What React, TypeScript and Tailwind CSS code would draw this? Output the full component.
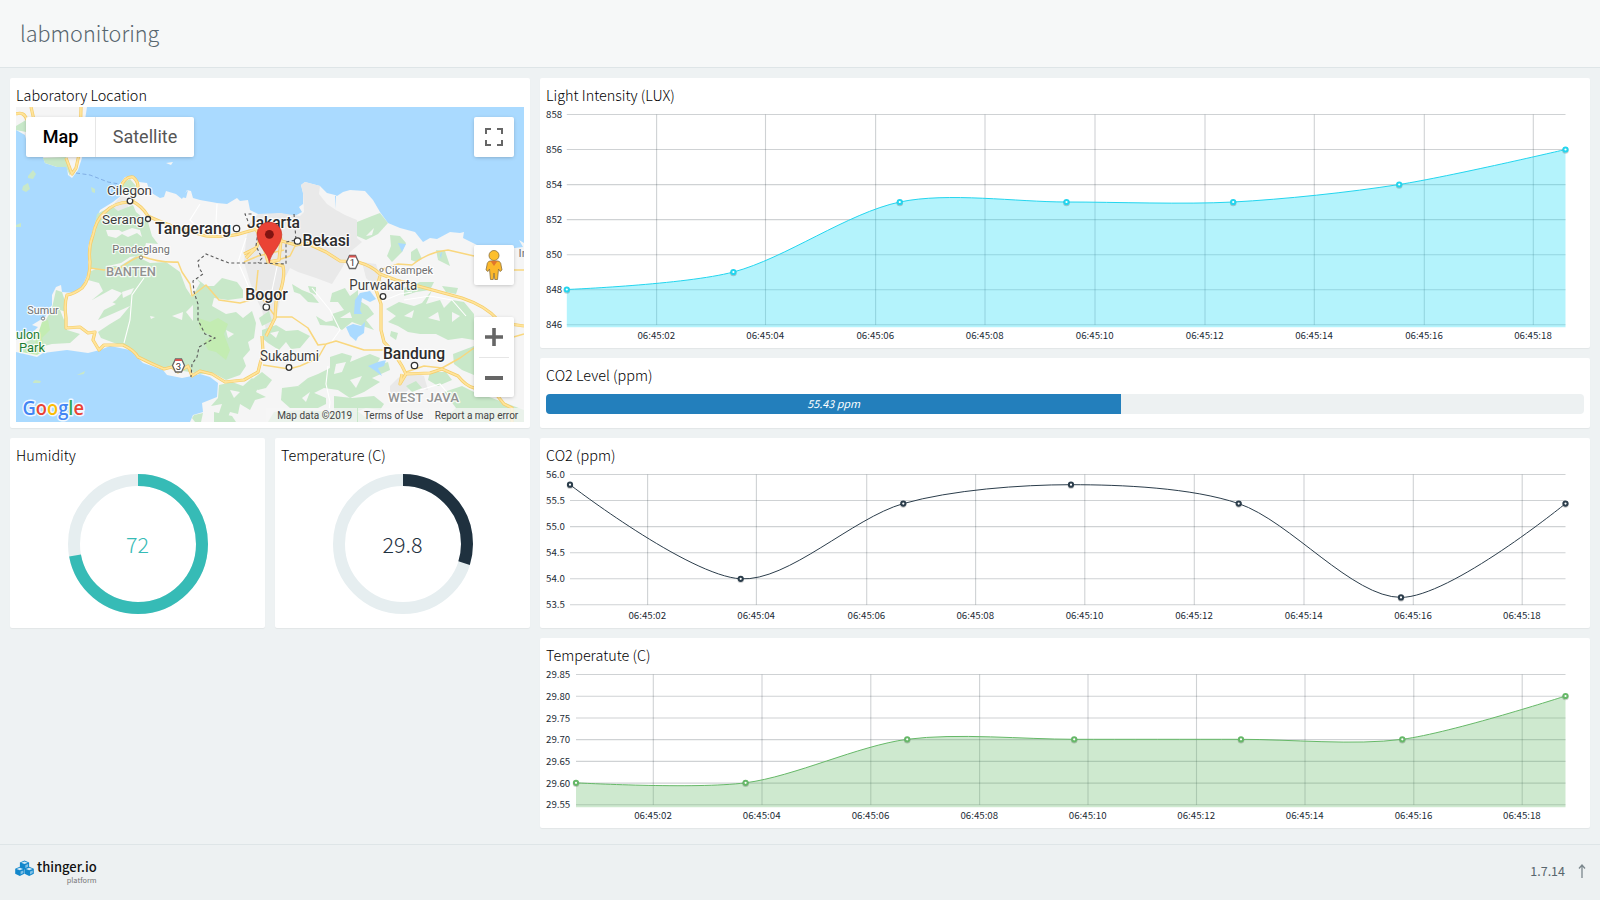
import type { ReactNode } from "react";

type Pt = [number, number];

const FONT = "font-['Noto_Sans_CJK_SC','Noto_Sans',sans-serif]";

/* ---------- charts ---------- */

function spline(pts: Pt[], smooth = 0.3): string {
  const ctrl = pts.map((p, i) => {
    const isEnd = i === 0 || i === pts.length - 1;
    const tension = isEnd ? 0 : smooth;
    const a = pts[Math.max(i - 1, 0)];
    const b = pts[Math.min(i + 1, pts.length - 1)];
    const d01 = Math.hypot(p[0] - a[0], p[1] - a[1]);
    const d12 = Math.hypot(b[0] - p[0], b[1] - p[1]);
    const fa = (tension * d01) / (d01 + d12);
    const fb = (tension * d12) / (d01 + d12);
    return {
      inn: [p[0] - fa * (b[0] - a[0]), p[1] - fa * (b[1] - a[1])],
      out: [p[0] + fb * (b[0] - a[0]), p[1] + fb * (b[1] - a[1])],
    };
  });
  let d = `M${pts[0][0]},${pts[0][1]}`;
  for (let i = 1; i < pts.length; i++) {
    const o = ctrl[i - 1].out;
    const n = ctrl[i].inn;
    d += ` C${o[0]},${o[1]} ${n[0]},${n[1]} ${pts[i][0]},${pts[i][1]}`;
  }
  return d;
}

interface ChartProps {
  height: number;
  left: number;
  top: number;
  bottom: number;
  labels: string[];
  ticks: number[];
  points: Pt[];
  stroke: string;
  fill?: string;
}

const RIGHT = 1025.5;

function Chart({ height, left, top, bottom, labels, ticks, points, stroke, fill }: ChartProps) {
  const step = (bottom - top) / (labels.length - 1);
  const line = spline(points);
  return (
    <svg width="1050" height={height} viewBox={`0 0 1050 ${height}`} className={`block ${FONT}`}>
      <g stroke="#1c2b36" strokeOpacity="0.21" strokeWidth="1.1">
        {labels.map((l, i) => (
          <line key={l} x1={left} x2={RIGHT} y1={top + i * step} y2={top + i * step} />
        ))}
        {ticks.map((t) => (
          <line key={t} x1={t} x2={t} y1={top} y2={bottom} />
        ))}
      </g>
      {fill && <path d={`${line} L${RIGHT},${bottom + 2.5} L${left},${bottom + 2.5} Z`} fill={fill} />}
      <path d={line} fill="none" stroke={stroke} strokeWidth="1" />
      {points.map(([x, y]) => (
        <g key={x}>
          <circle cx={x} cy={y + 1} r="3.3" fill="#000" fillOpacity="0.18" />
          <circle cx={x} cy={y} r="2.1" fill="#fff" stroke={stroke} strokeWidth="2" />
        </g>
      ))}
      <g fill="#1c2b36" fontSize="9.7">
        {labels.map((l, i) => (
          <text key={l} x="6" y={top + i * step + 3.6}>
            {l}
          </text>
        ))}
        {ticks.map((t, i) => (
          <text key={t} x={t - 0.3} y={bottom + 14.4} textAnchor="middle">
            {`06:45:${String((i + 1) * 2).padStart(2, "0")}`}
          </text>
        ))}
      </g>
    </svg>
  );
}

/* ---------- gauges ---------- */

function Donut({ value, share, color }: { value: string; share: number; color: string }) {
  const c = 2 * Math.PI * 64;
  return (
    <div className="flex justify-center pt-[7px]">
      <svg width="140" height="140" viewBox="0 0 140 140" className={FONT}>
        <circle cx="70" cy="70" r="64" fill="none" stroke="#e6eef0" strokeWidth="12" />
        <circle
          cx="70"
          cy="70"
          r="64"
          fill="none"
          stroke={color}
          strokeWidth="12"
          strokeDasharray={`${c * share} ${c}`}
          transform="rotate(-90 70 70)"
        />
        <text x="69.5" y="79" textAnchor="middle" fontSize="21.5" fontWeight="300" fill={color}>
          {value}
        </text>
      </svg>
    </div>
  );
}

/* ---------- map ---------- */

const GREEN = [
  "16,126 26,120 26,132 16,130",
  "43,158 66,157 70,168 70,176 66,167 57,167 45,163",
  "28,176 33,170 36,174 33,179 28,178",
  "23,186 28,183 30,189 26,192 22,190",
  "91,187 95,189 95,193 92,192",
  "16,225 21,223 21,227 16,227",
  "122,183 130,179 136,186 131,196 124,192",
  "97,214 112,206 118,211 133,205 136,212 148,222 152,236 158,244 146,243 143,255 130,257 121,263 108,266 100,270 89,268 89,246 93,233",
  "91,271 104,266 120,266 136,256 150,263 166,262 180,272 186,288 192,297 200,283 196,278 206,286 214,286 222,278 237,282 243,290 243,298 228,300 214,298 212,306 226,314 236,312 243,318 252,311 256,323 254,338 248,342 250,350 243,358 246,366 240,375 226,380 213,373 200,374 190,372 183,371 172,368 163,369 142,360 131,349 117,344 101,338 98,332 110,324 120,318 130,306 112,314 98,320 104,310 116,304 108,300 92,300 103,291 99,283 88,280",
  "56,290 62,292 66,304 66,318 67,330 80,334 70,343 52,344 40,347 37,354 24,352 20,345 34,338 44,324 52,308",
  "33,382 35,380 41,381 40,383 33,383",
  "77,375 85,371 84,374 78,375",
  "195,422 192,418 194,415 203,413 201,422",
  "219,385 232,382 243,386 252,378 260,384 256,392 266,397 255,400 250,410 240,404 238,414 230,412 226,422 216,422 222,404 211,406 218,398",
  "246,384 262,372 272,380 266,388 258,390",
  "214,412 232,416 236,422 214,422",
  "262,330 276,325 286,331 298,330 310,336 300,348 291,349 286,342 279,350 268,343 262,338",
  "259,318 269,311 272,321 262,326",
  "292,284 302,290 312,294 319,303 308,302 300,294 294,292",
  "308,286 316,287 316,295 310,292",
  "332,293 345,288 350,296 358,290 358,300 368,306 374,314 366,320 374,330 360,325 352,322 342,330 334,326 332,314 344,310 338,302 330,302",
  "316,316 326,322 335,320 336,326 320,325",
  "357,222 372,216 380,213 388,223 378,234 366,240 357,236",
  "390,235 400,236 406,243 402,252 392,262 387,256 391,246",
  "411,252 417,248 422,259 416,262 411,260",
  "436,250 445,251 450,266 438,260",
  "386,309 399,302 414,306 422,303 432,290 426,304 440,300 444,308 452,300 464,302 474,314 474,340 462,338 448,340 436,334 420,334 408,332 398,326 388,322 396,316",
  "404,288 420,282 434,282 430,290 416,292 404,296",
  "442,286 458,288 456,294 446,292",
  "391,331 398,333 396,340 390,336",
  "453,354 474,346 474,375 462,370 454,364",
  "330,357 342,353 352,356 350,362 362,357 370,354 380,358 376,366 388,362 390,370 372,378 380,382 364,392 350,398 338,390 324,388 312,394 298,386 308,378 318,374 330,368",
  "282,388 298,386 312,392 326,398 326,404 318,408 290,408 281,400",
  "334,396 352,398 374,396 384,404 380,410 366,408 350,414 334,410",
  "430,372 446,372 452,380 438,386 428,380",
  "444,392 462,386 474,392 492,398 508,404 524,410 524,422 440,422 456,408",
  "274,412 300,410 340,412 356,410 372,422 268,422",
  "406,386 416,381 422,388 412,392",
  "304,396 312,394 320,402 308,404",
];

const GAPS = [
  "106,230 119,230 122,232 132,228 140,230 142,237 137,233 128,237 122,234 116,238 108,236",
  "92,300 112,289 122,293 116,300 104,308 96,306",
  "122,292 134,288 131,294 123,298",
  "172,316 183,312 182,320",
  "186,312 193,305 193,321",
  "150,316 155,317 151,319",
  "366,236 374,228 372,235",
  "270,333 279,331 276,338",
  "340,318 350,312 352,318",
  "404,316 414,310 412,318",
  "428,318 438,312 440,321",
  "452,312 460,316 452,322",
  "336,364 346,362 342,372 334,374",
  "350,380 362,376 356,388",
  "302,398 310,392 306,402",
  "230,390 240,392 234,398",
  "226,330 234,334 228,338",
  "60,310 66,312 64,320",
];

const DARK = [
  "300,216 304,212 303,193 301,185 305,182 320,186 319,194 327,204 336,210 345,215 357,220 357,238 362,242 350,252 342,268 332,284 316,278 298,272 290,268 284,280 276,320 266,330 262,310 256,298 250,282 244,262 246,240 250,222 258,214 280,213",
  "121,196 128,198 128,208 118,212 112,206",
  "390,386 398,378 410,372 424,376 428,390 412,386 400,398 390,394",
  "362,262 376,264 382,282 374,286 366,278",
];

const ROADS_WIDE = [
  "M81,107 L80,150 L76,168 L72,174 L66,158",
  "M31,107 L34,120",
  "M16,114 Q24,111 27,120",
  "M121,187 Q125,176 133,177 Q140,183 137,190 L132,201 Q142,206 148,216 Q160,222 178,228 L206,236 Q228,238 246,232 L260,228",
  "M130,202 Q114,202 104,213 Q96,220 93,235 Q88,248 90,262 Q90,280 82,288 Q74,294 67,295 Q64,304 66,318 L66,328 L80,327 L88,333 L95,332 L93,340 L99,350 L104,345 L123,345 Q134,350 138,357 Q152,364 164,369 L172,367 L178,372 L188,366 L192,376 L200,371 L212,374 L225,382 L244,380 L258,372 L263,352 L262,336",
  "M244,254 L256,248 L262,236 M256,248 L246,258",
  "M269,262 L283,266 Q286,280 276,302 L275,318 L266,336",
  "M254,226 L262,240 L268,262 L279,260 L281,240 L278,222",
  "M278,240 L296,245 L306,243 L326,252 L340,261 L358,262 Q372,266 380,274 L396,280 Q440,292 462,298 Q486,306 498,320 L510,324 L524,326",
  "M380,276 L376,290 L381,304 L381,330 L384,342 Q394,352 402,366 L406,374 L430,373 L442,369 L458,376 Q466,386 474,388 L496,394 L504,404 L512,408 L512,422",
  "M402,374 L400,384 L406,374",
];

const ROADS_THIN = [
  "M90,268 L104,270 L120,268 Q134,258 141,256 Q160,263 178,262 L182,272 L190,284 L192,296 L206,285 L219,300 L240,303 L258,298",
  "M258,270 L256,290 L272,312 L276,317 L292,317 L308,328 L318,345 L326,344 L336,341 L364,350 L384,350",
  "M326,344 L318,358 L300,366 L289,369 L263,365",
  "M380,270 L398,264 L412,265 Q428,252 448,250 L474,256",
  "M406,372 L424,366 L442,368 L460,358 L474,348",
  "M509,270 L524,270",
  "M510,338 L524,334",
  "M296,244 L290,256 L278,260",
  "M244,262 L258,256 L284,250",
];

const WATER = [
  "M354,314 L355,300 L360,293 L370,291 L376,299 L370,302 L362,298 L360,310 L362,314 Z",
  "M346,327 L353,324 L361,326 L365,322 L364,333 L358,337 L356,341 L350,336 Z",
  "M368,366 L378,362 L386,360 L384,366 L378,368 L382,376 L374,370 Z",
  "M398,243 L406,244 L402,252 Z",
  "M181,197 L188,190 L186,198 Z",
  "M440,255 L442,251 L441,259 Z",
  "M335,196 L336,209 L336,196 Z",
];

const MINOR = [
  "M144,278 L132,295 L130,320 L124,343",
  "M246,238 L238,262 L250,290",
  "M278,262 L270,300",
  "M200,204 L190,220 L206,236",
  "M217,204 L216,222 L230,240",
  "M312,288 L330,310 L340,330 L330,344",
  "M404,300 L430,296 L452,300 L466,316",
  "M328,366 L326,384 L330,402 L328,420",
  "M420,390 L440,384 L450,396",
  "M380,302 L400,294 L412,292",
];

interface Place {
  t: string;
  x: number;
  y: number;
  s: number;
  w: number;
  c: string;
  b?: boolean;
  dot?: [number, number, number];
}

const PLACES: Place[] = [
  { t: "Cilegon", x: 107, y: 195, s: 13.6, w: 45, c: "#3c3c3c", dot: [130, 201, 2.8] },
  { t: "Serang", x: 102, y: 224, s: 13.6, w: 42, c: "#3c3c3c", dot: [148, 219, 2.5] },
  { t: "Tangerang", x: 155, y: 234, s: 16.2, w: 76, c: "#2c2c2c", b: true, dot: [236.5, 228.5, 3.2] },
  { t: "Jakarta", x: 247, y: 227.7, s: 16.2, w: 53, c: "#2c2c2c", b: true },
  { t: "Bekasi", x: 302.4, y: 246.3, s: 16.2, w: 47.5, c: "#2c2c2c", b: true, dot: [297.5, 241, 3.2] },
  { t: "Pandeglang", x: 112.3, y: 253, s: 11.5, w: 57.5, c: "#707070", dot: [141, 257.5, 1.6] },
  { t: "BANTEN", x: 106, y: 276, s: 13, w: 50, c: "#929292", b: true },
  { t: "Sumur", x: 27.3, y: 314, s: 11.5, w: 31.5, c: "#707070", dot: [43, 318.5, 1.6] },
  { t: "Bogor", x: 245.3, y: 300, s: 16, w: 42.5, c: "#2c2c2c", b: true, dot: [266.3, 307, 3.2] },
  { t: "Sukabumi", x: 260, y: 361, s: 14, w: 59, c: "#3c3c3c", dot: [289, 367.5, 2.8] },
  { t: "Bandung", x: 383, y: 358.7, s: 16.2, w: 62, c: "#2c2c2c", b: true, dot: [414.5, 365.5, 3.2] },
  { t: "WEST JAVA", x: 388, y: 402, s: 13, w: 71, c: "#929292", b: true },
  { t: "Purwakarta", x: 349.3, y: 290, s: 14, w: 68, c: "#3c3c3c", dot: [383, 296.5, 2.8] },
  { t: "Cikampek", x: 385, y: 274, s: 11.5, w: 48, c: "#707070", dot: [381.5, 270, 1.6] },
  { t: "ulon", x: 16, y: 339, s: 13, w: 24, c: "#1c7d33" },
  { t: "Park", x: 19, y: 352, s: 13, w: 26, c: "#1c7d33" },
];

function Shield({ x, y, n }: { x: number; y: number; n: string }) {
  return (
    <g transform={`translate(${x} ${y})`}>
      <path d="M-3,-6.5 H3 L6,0 L3,6.5 H-3 L-6,0 Z" fill="#fff" stroke="#666" strokeWidth="1.3" />
      <path d="M-2.8,-6.5 H2.8 L3.8,-4.4 H-3.8 Z" fill="#d9534f" />
      <text y="4" textAnchor="middle" fontSize="9.5" fill="#333">
        {n}
      </text>
    </g>
  );
}

function MapDrawing() {
  return (
    <svg
      width="508"
      height="315"
      viewBox="16 107 508 315"
      className="block font-['Roboto','Liberation_Sans',sans-serif]"
    >
      <rect x="16" y="107" width="508" height="315" fill="#aadaff" />
      <g fill="#f5f5f5">
        <path d="M16,107 H87 L85,120 L84,135 L82,158 L78,170 L72,178 L68,175 L67,167 L57,167 L45,163 L43,157 L27,143 L25,135 L16,130 Z" />
        <path d="M119,185 L125,177 L133,176 L139,182 L147,183 L150,192 L160,198 L164,197 L166,191 L176,194 L182,199 L187,190 L191,191 L193,198 L200,200 L217,203 L227,204 L237,198 L240,201 L248,200 L250,210 L258,214 L270,215 L280,213 L293,217 L302,212 L299,207 L303,204 L303,193 L301,185 L305,182 L320,186 L327,193 L335,195 L337,196 L343,192 L350,190 L365,191 L373,200 L380,212 L388,223 L400,228 L415,232 L423,242 L430,238 L437,239 L450,232 L460,233 L464,232 L463,238 L477,245 L515,248 L523,247 L519,240 L524,243 V422 H190 L193,415 L203,412 L202,403 L217,397 L218,383 L210,377 L200,374 L192,376 L182,378 L167,375 L163,370 L143,363 L130,350 L110,346 L100,350 L88,353 L67,350 L43,353 L37,357 L16,352 V340 L30,335 L38,327 L32,325 L45,317 L52,305 L52,295 L56,287 L61,285 L62,292 L75,293 L83,285 L88,273 L88,247 L92,233 L97,217 L100,210 L113,202 L122,195 Z" />
        <path d="M166,163 L173,162 L171,165 Z" />
      </g>
      <g fill="#e9e9e9">
        {DARK.map((p) => (
          <polygon key={p} points={p} />
        ))}
      </g>
      <g fill="#c8e8c9">
        {GREEN.map((p) => (
          <polygon key={p} points={p} />
        ))}
      </g>
      <g fill="#c3ecb2">
        <path d="M198,318 L210,322 L218,318 L228,324 L224,334 L230,350 L226,360 L216,352 L208,350 L204,342 L212,336 L200,330 Z" />
        <path d="M42,322 L48,320 L50,330 L42,338 L45,350 L37,355 L22,352 L34,346 Z" />
      </g>
      <g fill="#f5f5f5">
        {GAPS.map((p) => (
          <polygon key={p} points={p} />
        ))}
      </g>
      <g fill="#aadaff">
        {WATER.map((p) => (
          <path key={p} d={p} />
        ))}
      </g>
      <g fill="none" stroke="#fff" strokeWidth="1.1">
        {MINOR.map((p) => (
          <path key={p} d={p} />
        ))}
      </g>
      <g fill="none" strokeLinejoin="round">
        <g stroke="#f9d77e" strokeWidth="1.5">
          {ROADS_THIN.map((p) => (
            <path key={p} d={p} />
          ))}
        </g>
        <g stroke="#f5cd6a" strokeWidth="3.2">
          {ROADS_WIDE.map((p) => (
            <path key={p} d={p} />
          ))}
        </g>
        <g stroke="#ffe49b" strokeWidth="1.8">
          {ROADS_WIDE.map((p) => (
            <path key={p} d={p} />
          ))}
        </g>
      </g>
      <path d="M76,173 L90,175 L108,182 L119,184" fill="none" stroke="#82afe6" strokeWidth="1" strokeDasharray="4 2.5" />
      <g fill="none" stroke="#5b5b5b" strokeWidth="1.1" strokeDasharray="3 2.5">
        <path d="M250,226 L245,214 L252,214 M294,214 L296,240 L286,242 L286,264 L258,263 L229,263 L216,258 L206,254 L198,261 L199,268 L203,274 L193,281 L194,292 L198,304 L198,320 L205,334 L215,338 L199,347 L197,357 L192,364 L191,377" />
        <path d="M258,232 L256,246 L262,258 L258,263" />
      </g>
      <Shield x={178.5} y={365.5} n="3" />
      <Shield x={352.5} y={262} n="1" />
      <g fill="#fff">
        {PLACES.map(
          (p) =>
            p.dot && (
              <circle
                key={p.t}
                cx={p.dot[0]}
                cy={p.dot[1]}
                r={p.dot[2]}
                stroke={p.dot[2] < 2 ? "#777" : "#333"}
                strokeWidth={p.dot[2] < 2 ? 1 : 1.3}
              />
            ),
        )}
      </g>
      {PLACES.map((p) => (
        <text
          key={p.t}
          x={p.x}
          y={p.y}
          fontSize={p.s}
          textLength={p.w}
          lengthAdjust="spacingAndGlyphs"
          fontWeight={p.b ? 500 : 400}
          fill={p.c}
          stroke="#fff"
          strokeOpacity="0.85"
          strokeWidth="2.4"
          strokeLinejoin="round"
          paintOrder="stroke"
        >
          {p.t}
        </text>
      ))}
      <text x="518.5" y="257" fontSize="11.5" fill="#707070">
        In
      </text>
      <path
        d="M269.3,263 C268,252 257,246 257,234.5 A12.4,12.4 0 0 1 281.8,234.5 C281.8,246 270.6,252 269.3,263 Z"
        fill="#ea4335"
        stroke="#c5372c"
        strokeWidth="0.6"
      />
      <circle cx="269.4" cy="234.3" r="4.4" fill="#811411" />
      <text
        x="22.5"
        y="415"
        fontSize="20.5"
        textLength="61.5"
        lengthAdjust="spacingAndGlyphs"
        stroke="#fff"
        strokeWidth="3"
        strokeOpacity="0.85"
        strokeLinejoin="round"
        paintOrder="stroke"
        className="font-['Open_Sans','Lato',sans-serif] font-semibold"
      >
        <tspan fill="#4285f4">G</tspan>
        <tspan fill="#ea4335">o</tspan>
        <tspan fill="#fbbc05">o</tspan>
        <tspan fill="#4285f4">g</tspan>
        <tspan fill="#34a853">l</tspan>
        <tspan fill="#ea4335">e</tspan>
      </text>
    </svg>
  );
}

function MapPanel() {
  return (
    <div className="relative mx-[6px] h-[315px] w-[508px] overflow-hidden font-['Roboto','Liberation_Sans',sans-serif]">
      <MapDrawing />
      <div className="absolute top-[10px] left-[10px] flex h-10 overflow-hidden rounded-[2px] bg-white text-[18px] leading-10 shadow-[0_1px_4px_-1px_rgba(0,0,0,0.3)]">
        <div className="w-[70px] border-r border-[#e6e6e6] text-center font-medium text-black">Map</div>
        <div className="w-[98px] text-center text-[#565656]">Satellite</div>
      </div>
      <div className="absolute top-[10px] right-[10px] flex h-10 w-10 items-center justify-center rounded-[2px] bg-white shadow-[0_1px_4px_-1px_rgba(0,0,0,0.3)]">
        <svg width="18" height="18" viewBox="0 0 18 18" fill="#666">
          <path d="M0,0 V6 H2 V2 H6 V0 Z M16,0 H12 V2 H16 V6 H18 V0 Z M16,16 H12 V18 H18 V12 H16 Z M2,12 H0 V18 H6 V16 H2 Z" />
        </svg>
      </div>
      <div className="absolute top-[138px] right-[10px] flex h-10 w-10 items-center justify-center rounded-[2px] bg-white pr-px shadow-[0_1px_4px_-1px_rgba(0,0,0,0.3)]">
        <svg width="20" height="32" viewBox="0 0 20 32">
          <path
            d="M6,12 H14 C16,12.5 17,14 17,16 L18,21 L16,22.5 L14.5,20 L13.5,30.5 H10.8 L10,24 L9.2,30.5 H6.5 L5.5,20 L4,22.5 L2,21 L3,16 C3,14 4,12.5 6,12 Z"
            fill="#fbb82b"
            stroke="#8a7140"
            strokeWidth="0.8"
          />
          <path d="M6.5,12 H13.5 L10,17 Z" fill="#e0762c" />
          <circle cx="10" cy="6.5" r="5" fill="#fdbf2d" stroke="#8a7140" strokeWidth="0.8" />
        </svg>
      </div>
      <div className="absolute top-[210px] right-[10px] flex h-20 w-10 flex-col items-center rounded-[2px] bg-white shadow-[0_1px_4px_-1px_rgba(0,0,0,0.3)]">
        <div className="flex h-10 items-center">
          <svg width="18" height="18" viewBox="0 0 18 18" fill="#666">
            <path d="M7.2,0 H10.8 V7.2 H18 V10.8 H10.8 V18 H7.2 V10.8 H0 V7.2 H7.2 Z" />
          </svg>
        </div>
        <div className="h-px w-[30px] bg-[#e6e6e6]" />
        <div className="flex h-[39px] items-center">
          <div className="h-[4px] w-[18px] bg-[#666]" />
        </div>
      </div>
      <div className="absolute right-0 bottom-0 flex h-[14px] gap-px text-[10px] leading-[16px] whitespace-nowrap text-[#444]">
        <div className="w-[91px] bg-[#f5f5f5]/75 pr-[5px] text-right">Map data ©2019</div>
        <div className="w-[70px] bg-[#f5f5f5]/75 pl-px text-center">Terms of Use</div>
        <div className="w-[95px] bg-[#f5f5f5]/75 text-center">Report a map error</div>
      </div>
    </div>
  );
}

/* ---------- page ---------- */

function Card({ title, className = "", children }: { title: string; className?: string; children: ReactNode }) {
  return (
    <section className={`overflow-hidden rounded-[2px] bg-white shadow-[0_1px_1px_rgba(0,0,0,0.05)] ${className}`}>
      <h2 className="h-[29px] pl-[6px] text-[14.4px] leading-[34px] font-light text-black">{title}</h2>
      {children}
    </section>
  );
}

function Cube({ x, y }: { x: number; y: number }) {
  return (
    <g transform={`translate(${x} ${y})`}>
      <path d="M0,-4.6 L4.6,-2.6 V2.4 L0,4.6 L-4.6,2.4 V-2.6 Z" fill="#1287cb" />
      <path d="M-3.3,-2.3 L0,-3.6 L3.3,-2.3 L0,-1 Z" fill="#cfe8f6" />
      <path d="M0.8,0.3 L3.6,-0.9 V1.8 L0.8,3.2 Z" fill="#7fc0e6" />
    </g>
  );
}

export default function App() {
  return (
    <div className={`flex h-[900px] w-[1600px] flex-col overflow-hidden bg-[#eef2f3] ${FONT}`}>
      <header className="h-[68px] border-b border-[#dee5e7] bg-[#f6f8f8] pl-5">
        <h1 className="text-[21.6px] leading-[65px] font-light text-[#58666e]">labmonitoring</h1>
      </header>

      <main className="grid h-[776px] grid-cols-[255px_255px_1050px] grid-rows-[270px_70px_190px_190px] gap-[10px] p-[10px]">
        <Card title="Laboratory Location" className="col-span-2 row-span-2">
          <MapPanel />
        </Card>
        <Card title="Light Intensity (LUX)">
          <Chart
            height={241}
            left={26.8}
            top={7.5}
            bottom={217.8}
            labels={["858", "856", "854", "852", "850", "848", "846"]}
            ticks={[116.6, 225.5, 335.6, 445, 555, 665, 774.3, 884.3, 993.3]}
            points={[
              [26.8, 182.5],
              [193.4, 165],
              [359.8, 95],
              [526.5, 95],
              [693.2, 95],
              [859.2, 77.5],
              [1025.5, 42.5],
            ]}
            stroke="#23d5ee"
            fill="rgba(35,219,247,0.34)"
          />
        </Card>
        <Card title="CO2 Level (ppm)">
          <div className="mx-[6px] mt-[7px] h-5 overflow-hidden rounded-[4px] bg-[#edf1f2]">
            <div className="h-5 w-[55.43%] bg-[#237fbc] text-center text-[10.8px] leading-[19px] font-normal text-white italic">
              55.43 ppm
            </div>
          </div>
        </Card>
        <Card title="Humidity">
          <Donut value="72" share={0.72} color="#36bbb6" />
        </Card>
        <Card title="Temperature (C)">
          <Donut value="29.8" share={0.298} color="#1f313f" />
        </Card>
        <Card title="CO2 (ppm)">
          <Chart
            height={161}
            left={30}
            top={7.5}
            bottom={137.8}
            labels={["56.0", "55.5", "55.0", "54.5", "54.0", "53.5"]}
            ticks={[107.6, 216.4, 326.7, 435.6, 544.8, 654.3, 764, 873.3, 982.2]}
            points={[
              [30, 17.7],
              [200.7, 111.8],
              [363.3, 36.6],
              [531, 17.7],
              [698.7, 36.6],
              [861, 130.4],
              [1025.5, 36.6],
            ]}
            stroke="#2b3d4b"
          />
        </Card>
        <Card title="Temperatute (C)" className="col-start-3">
          <Chart
            height={161}
            left={36}
            top={7.5}
            bottom={137.8}
            labels={["29.85", "29.80", "29.75", "29.70", "29.65", "29.60", "29.55"]}
            ticks={[113.3, 222, 330.8, 439.6, 548, 656.5, 765, 873.8, 982.2]}
            points={[
              [36, 115.8],
              [205.6, 115.8],
              [367.2, 72.3],
              [534.2, 72.3],
              [701, 72.3],
              [862.3, 72.3],
              [1025.5, 29],
            ]}
            stroke="#66b868"
            fill="rgba(94,181,97,0.30)"
          />
        </Card>
      </main>

      <footer className="flex flex-1 justify-between border-t border-[#dee5e7] bg-[#edf1f2] pr-[14px] pl-[15px]">
        <div className="flex gap-[3px] pt-[15px]">
          <svg width="19" height="17" viewBox="0 0 19 17">
            <Cube x={9.5} y={5} />
            <Cube x={4.8} y={11.3} />
            <Cube x={14.2} y={11.3} />
          </svg>
          <div className="flex flex-col items-end">
            <span className="h-[14px] text-[13px] leading-[14px] font-medium text-[#111]">thinger.io</span>
            <span className="text-[7.4px] leading-[11px] text-[#777]">platform</span>
          </div>
        </div>
        <div className="flex items-center gap-[13px] pb-[3px] text-[12.5px] leading-none text-[#58666e]">
          <span>1.7.14</span>
          <svg width="8" height="14" viewBox="0 0 8 14" fill="none" stroke="#7b878d" strokeWidth="1.3">
            <path d="M4,14 V1 M1,4.5 L4,1 L7,4.5" />
          </svg>
        </div>
      </footer>
    </div>
  );
}
